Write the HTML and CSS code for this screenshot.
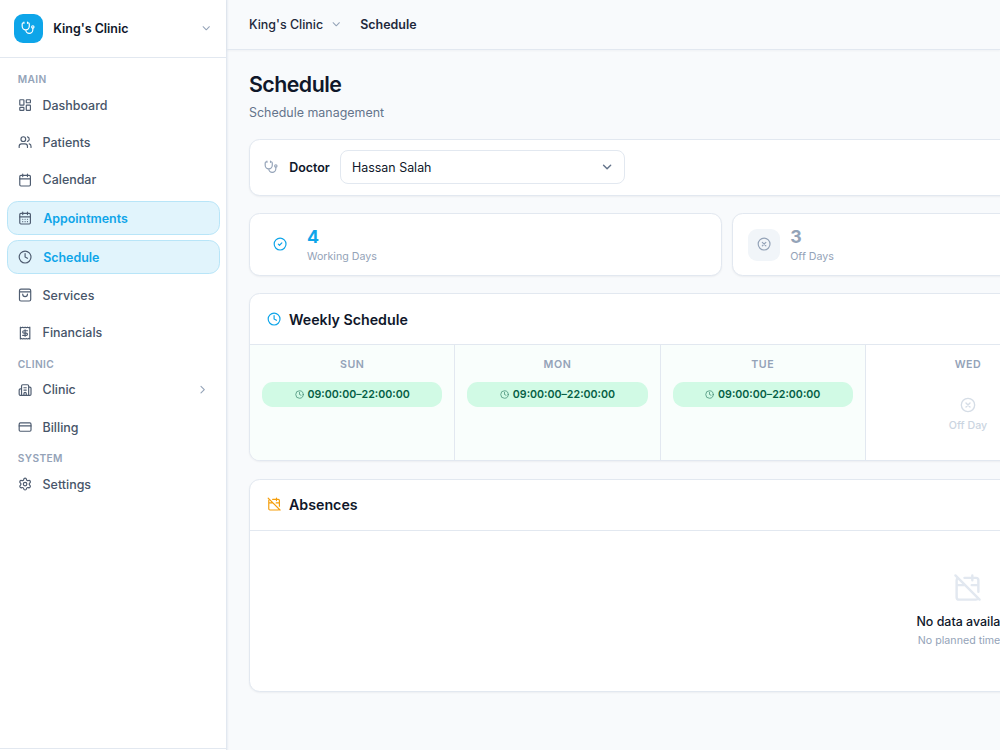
FILE: index.html
```html
<!DOCTYPE html>
<html lang="en">
<head>
<meta charset="utf-8">
<title>Schedule</title>
<link rel="stylesheet" href="styles.css">
</head>
<body>
<svg class="defs" aria-hidden="true">
  <symbol id="stethoscope" viewBox="0 0 24 24"><path d="M11 2v2M5 2v2M5 3H4a2 2 0 0 0-2 2v4a6 6 0 0 0 12 0V5a2 2 0 0 0-2-2h-1M8 15a6 6 0 0 0 12 0v-3"/><circle cx="20" cy="10" r="2"/></symbol>
  <symbol id="down" viewBox="0 0 24 24"><path d="m6 9 6 6 6-6"/></symbol>
  <symbol id="right" viewBox="0 0 24 24"><path d="m9 18 6-6-6-6"/></symbol>
  <symbol id="dashboard" viewBox="0 0 24 24"><rect x="3" y="3" width="7" height="9" rx="1"/><rect x="14" y="3" width="7" height="5" rx="1"/><rect x="14" y="12" width="7" height="9" rx="1"/><rect x="3" y="16" width="7" height="5" rx="1"/></symbol>
  <symbol id="users" viewBox="0 0 24 24"><path d="M16 21v-2a4 4 0 0 0-4-4H6a4 4 0 0 0-4 4v2M22 21v-2a4 4 0 0 0-3-3.87M16 3.13a4 4 0 0 1 0 7.75"/><circle cx="9" cy="7" r="4"/></symbol>
  <symbol id="calendar" viewBox="0 0 24 24"><path d="M8 2v4M16 2v4M3 10h18"/><rect x="3" y="4" width="18" height="18" rx="2"/></symbol>
  <symbol id="calendar-days" viewBox="0 0 24 24"><path d="M8 2v4M16 2v4M3 10h18M8 14h.01M12 14h.01M16 14h.01M8 18h.01M12 18h.01M16 18h.01"/><rect x="3" y="4" width="18" height="18" rx="2"/></symbol>
  <symbol id="clock" viewBox="0 0 24 24"><circle cx="12" cy="12" r="10"/><path d="M12 6v6l4 2"/></symbol>
  <symbol id="bag" viewBox="0 0 24 24"><rect x="2.5" y="2" width="19" height="20" rx="2.5"/><path d="M3 6.5h18M16 10.5a4 4 0 0 1-8 0"/></symbol>
  <symbol id="receipt" viewBox="0 0 24 24"><path d="M4 2v20l2-1 2 1 2-1 2 1 2-1 2 1 2-1 2 1V2l-2 1-2-1-2 1-2-1-2 1-2-1-2 1ZM16 8h-6a2 2 0 1 0 0 4h4a2 2 0 1 1 0 4H8M12 17.5v-11"/></symbol>
  <symbol id="building" viewBox="0 0 24 24"><path d="M10 12h4M10 8h4M14 21v-3a2 2 0 0 0-4 0v3M6 10H4a2 2 0 0 0-2 2v7a2 2 0 0 0 2 2h16a2 2 0 0 0 2-2V9a2 2 0 0 0-2-2h-2M6 21V5a2 2 0 0 1 2-2h8a2 2 0 0 1 2 2v16"/></symbol>
  <symbol id="card" viewBox="0 0 24 24"><rect x="2" y="5" width="20" height="14" rx="2"/><path d="M2 10h20"/></symbol>
  <symbol id="gear" viewBox="0 0 24 24"><path d="M9.67 4.14a2.34 2.34 0 0 1 4.66 0 2.34 2.34 0 0 0 3.32 1.91 2.34 2.34 0 0 1 2.33 4.04 2.34 2.34 0 0 0 0 3.83 2.34 2.34 0 0 1-2.33 4.03 2.34 2.34 0 0 0-3.32 1.92 2.34 2.34 0 0 1-4.66 0 2.34 2.34 0 0 0-3.32-1.92 2.34 2.34 0 0 1-2.33-4.03 2.34 2.34 0 0 0 0-3.83 2.34 2.34 0 0 1 2.33-4.04 2.34 2.34 0 0 0 3.32-1.91"/><circle cx="12" cy="12" r="3"/></symbol>
  <symbol id="check" viewBox="0 0 24 24"><circle cx="12" cy="12" r="10"/><path d="m9 12 2 2 4-4"/></symbol>
  <symbol id="cross" viewBox="0 0 24 24"><circle cx="12" cy="12" r="10"/><path d="m15 9-6 6M9 9l6 6"/></symbol>
  <symbol id="calendar-off" viewBox="0 0 24 24"><path d="M4.2 4.2A2 2 0 0 0 3 6v14a2 2 0 0 0 2 2h14a2 2 0 0 0 1.82-1.18M21 15.5V6a2 2 0 0 0-2-2H9.5M16 2v4M3 10h7M21 10h-5.5M2 2l20 20"/></symbol>
</svg>
<div class="app">
  <aside class="sidebar">
    <div class="brand">
      <span class="logo"><svg class="icon"><use href="#stethoscope"/></svg></span>
      <span class="brand-name">King's Clinic</span>
      <svg class="icon chevron"><use href="#down"/></svg>
    </div>
    <nav class="nav">
      <div class="nav-label">MAIN</div>
      <a class="nav-item"><svg class="icon"><use href="#dashboard"/></svg>Dashboard</a>
      <a class="nav-item"><svg class="icon"><use href="#users"/></svg>Patients</a>
      <a class="nav-item"><svg class="icon"><use href="#calendar"/></svg>Calendar</a>
      <a class="nav-item active"><svg class="icon"><use href="#calendar-days"/></svg>Appointments</a>
      <a class="nav-item active"><svg class="icon"><use href="#clock"/></svg>Schedule</a>
      <a class="nav-item"><svg class="icon"><use href="#bag"/></svg>Services</a>
      <a class="nav-item"><svg class="icon"><use href="#receipt"/></svg>Financials</a>
      <div class="nav-label">CLINIC</div>
      <a class="nav-item"><svg class="icon"><use href="#building"/></svg>Clinic<svg class="icon chevron"><use href="#right"/></svg></a>
      <a class="nav-item"><svg class="icon"><use href="#card"/></svg>Billing</a>
      <div class="nav-label">SYSTEM</div>
      <a class="nav-item"><svg class="icon"><use href="#gear"/></svg>Settings</a>
    </nav>
    <div class="sidebar-foot"></div>
  </aside>
  <div class="page">
    <header class="topbar">
      <span>King's Clinic</span>
      <svg class="icon chevron"><use href="#down"/></svg>
      <span class="current">Schedule</span>
    </header>
    <main class="main">
      <h1 class="title">Schedule</h1>
      <p class="subtitle">Schedule management</p>
      <section class="panel filter">
        <svg class="icon"><use href="#stethoscope"/></svg>
        <span class="filter-label">Doctor</span>
        <div class="select">Hassan Salah<svg class="icon"><use href="#down"/></svg></div>
      </section>
      <section class="stats">
        <div class="panel stat working">
          <span class="stat-icon"><svg class="icon"><use href="#check"/></svg></span>
          <div><div class="stat-value">4</div><div class="stat-name">Working Days</div></div>
        </div>
        <div class="panel stat off">
          <span class="stat-icon"><svg class="icon"><use href="#cross"/></svg></span>
          <div><div class="stat-value">3</div><div class="stat-name">Off Days</div></div>
        </div>
      </section>
      <section class="panel weekly">
        <h2 class="panel-head"><svg class="icon"><use href="#clock"/></svg>Weekly Schedule</h2>
        <div class="week">
          <div class="day open"><div class="day-name">SUN</div><div class="slot"><svg class="icon"><use href="#clock"/></svg>09:00:00–22:00:00</div></div>
          <div class="day open"><div class="day-name">MON</div><div class="slot"><svg class="icon"><use href="#clock"/></svg>09:00:00–22:00:00</div></div>
          <div class="day open"><div class="day-name">TUE</div><div class="slot"><svg class="icon"><use href="#clock"/></svg>09:00:00–22:00:00</div></div>
          <div class="day"><div class="day-name">WED</div><div class="closed"><svg class="icon"><use href="#cross"/></svg>Off Day</div></div>
        </div>
      </section>
      <section class="panel absences">
        <h2 class="panel-head"><svg class="icon"><use href="#calendar-off"/></svg>Absences</h2>
        <div class="empty">
          <svg class="icon"><use href="#calendar-off"/></svg>
          <div class="empty-title">No data available</div>
          <div class="empty-text">No planned time off</div>
        </div>
      </section>
    </main>
  </div>
</div>
</body>
</html>
```
FILE: styles.css
```css
* { box-sizing: border-box; }
html, body { margin: 0; height: 100%; overflow: hidden; }
body { background: #f8fafc; color: #0f172a; font-family: Inter, "Liberation Sans", sans-serif; font-size: 12.45px; }
.defs { position: absolute; width: 0; height: 0; }
.icon { width: 14.2px; height: 14.2px; flex: none; fill: none; stroke: currentColor; stroke-width: 2; stroke-linecap: round; stroke-linejoin: round; }
.app { display: flex; height: 750px; overflow: hidden; }

.sidebar { width: 227px; flex: none; display: flex; flex-direction: column; background: #fff; border-right: 1px solid #e2e8f0; box-shadow: 1px 0 1px #e2e8f080; }
.brand { height: 58px; flex: none; display: flex; align-items: center; padding: 0 14px; border-bottom: 1px solid #e2e8f0; }
.logo { width: 29px; height: 29px; border-radius: 9px; background: #0ea5e9; color: #fff; display: grid; place-items: center; }
.brand-name { margin-left: 10.2px; font-weight: 600; }
.chevron { color: #94a3b8; }
.brand .chevron { width: 12.5px; height: 12.5px; margin-left: auto; }
.nav { flex: 1; display: flex; flex-direction: column; padding: 12px 6.5px 0 7px; }
.nav-label { height: 19.4px; line-height: 19.4px; padding-left: 10.7px; font-size: 10.2px; font-weight: 600; letter-spacing: .4px; color: #94a3b8; margin-bottom: -.2px; }
.nav-item + .nav-label { margin-top: .7px; }
.nav-item { height: 32px; display: flex; align-items: center; gap: 10.7px; padding: 0 10.7px; margin-bottom: 5.33px; font-weight: 500; color: #475569; border-radius: 10.7px; }
.nav-item.active { height: 33.8px; border: 1px solid #b8e5f8; background: #e1f4fc; color: #0ea5e9; font-weight: 600; padding: 0 10.3px; }
.nav-item .icon { color: #4f5d71; }
.nav-item .chevron { width: 13.3px; height: 13.3px; margin-left: auto; margin-right: -.5px; color: #94a3b8; }
.sidebar-foot { height: 2px; border-top: 1px solid #e2e8f0; }

.page { flex: 1; min-width: 0; }
.topbar { height: 50px; display: flex; align-items: center; padding: 0 0 0 22px; border-bottom: 1px solid #e2e8f0; box-shadow: 0 1px 2px #0f172a0a; font-weight: 500; color: #1e293b; }
.topbar .chevron { width: 12.5px; height: 12.5px; margin: 0 17.9px 0 6.8px; }
.current { font-weight: 600; }
.main { width: 1483px; padding: 19px 22px; }
.title { margin: 0; font-size: 21.33px; line-height: 30px; font-weight: 600; letter-spacing: -.53px; }
.subtitle { margin: 4px 0 17px; line-height: 19px; color: #64748b; }
.panel { background: #fff; border: 1px solid #e2e8f0; border-radius: 10.7px; box-shadow: 0 1px 2px #0f172a0d; }
.filter { height: 57px; display: flex; align-items: center; padding: 0 0 1px 14px; color: #94a3b8; }
.filter-label { margin: 0 10.5px 0 11px; font-weight: 600; color: #0f172a; }
.select { width: 284.5px; height: 34px; display: flex; align-items: center; justify-content: space-between; padding: 0 10px 0 10.7px; border: 1px solid #e2e8f0; border-radius: 8px; color: #0f172a; }
.select .icon { color: #64748b; stroke-width: 2.4; }
.stats { display: grid; grid-template-columns: repeat(3, 1fr); gap: 10.7px; margin: 17px 0; }
.stat { height: 63px; display: flex; align-items: center; gap: 10.5px; padding-left: 14.5px; }
.stat-icon { width: 32px; height: 32px; border-radius: 9px; display: grid; place-items: center; }
.stat-value { margin-top: 2px; font-size: 17.8px; line-height: 22px; font-weight: 700; }
.stat-name { font-size: 10.67px; line-height: 17px; color: #94a3b8; }
.working { color: #0ea5e9; }
.off { color: #94a3b8; }
.off .stat-icon { background: #f1f5f9; }
.panel-head { margin: 0; height: 51px; display: flex; align-items: center; gap: 7.5px; padding: 0 0 0 17.3px; border-bottom: 1px solid #e2e8f0; font-size: 14.22px; font-weight: 600; }
.weekly { height: 168px; margin-bottom: 18px; overflow: hidden; }
.weekly .panel-head .icon { color: #0ea5e9; }
.week { display: grid; grid-template-columns: repeat(7, 1fr); height: 116px; }
.day { padding: 12px; border-right: 1px solid #e2e8f0; display: flex; flex-direction: column; align-items: center; }
.day.open { background: #f9fefc; }
.day-name { line-height: 16px; font-size: 10.67px; font-weight: 600; letter-spacing: .5px; color: #94a3b8; }
.slot { width: 100%; height: 25px; margin-top: 9px; padding-bottom: 1px; border-radius: 10.7px; background: #d1fae5; color: #065f46; display: flex; align-items: center; justify-content: center; gap: 4px; font-size: 10.67px; font-weight: 600; }
.slot .icon { width: 9px; height: 9px; opacity: .7; margin-top: 1px; }
.closed { display: flex; flex-direction: column; align-items: center; gap: 5px; margin-top: 24px; color: #cbd5e1; font-size: 10.67px; font-weight: 500; line-height: 16px; }
.closed .icon { width: 16px; height: 16px; opacity: .8; }
.absences { width: 1437px; height: 213px; }
.absences .panel-head { padding-bottom: 1px; }
.absences .panel-head .icon { color: #f59e0b; }
.empty { display: flex; flex-direction: column; align-items: center; padding-top: 41.5px; }
.empty .icon { width: 29px; height: 29px; color: #e2e8f0; }
.empty-title { margin-top: 10.5px; line-height: 20px; font-weight: 500; }
.empty-text { line-height: 18px; font-size: 10.67px; color: #94a3b8; }
```
